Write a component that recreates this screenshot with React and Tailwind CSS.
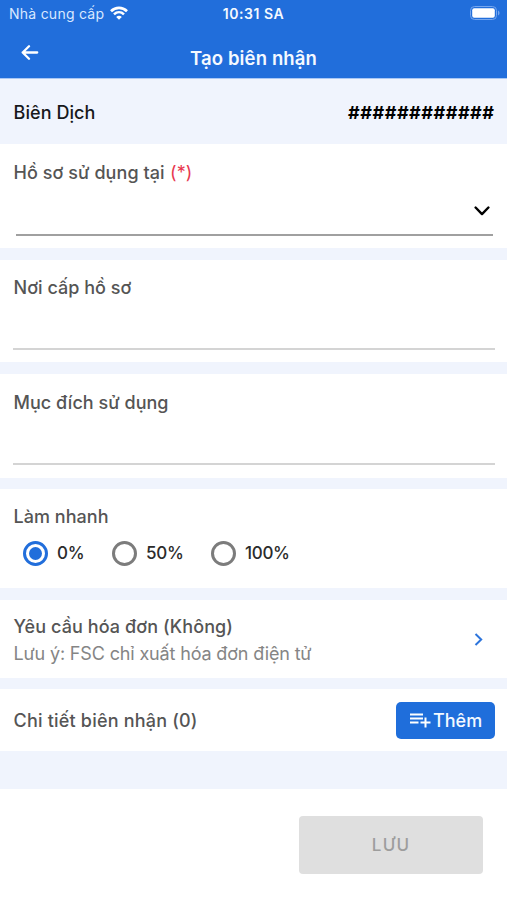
import React from "react";

const speeds = [
  { label: "0%", checked: true, box: "w-[89px]" },
  { label: "50%", checked: false, box: "w-[99px]" },
  { label: "100%", checked: false, box: "w-[90px]" },
];

function StatusBar() {
  return (
    <div className="grid h-7 grid-cols-3 items-center pr-[7px] pl-[9px] text-[14px] leading-7 text-white">
      <div className="flex items-center gap-[6px] text-[#d9e8ff]">
        <span className="tracking-[0.25px] whitespace-nowrap">Nhà cung cấp</span>
        <svg className="-mt-[2px] h-[14px] w-[18px]" viewBox="0 0 18 14" fill="none" stroke="#fff">
          <path d="M1 5.2C5.6.7 12.4.7 17 5.2" strokeWidth="2.7" />
          <path d="M4 8.4c2.9-2.8 7.1-2.8 10 0" strokeWidth="2.5" />
          <path d="M9 13.7 6.2 10.9c1.6-1.5 4-1.5 5.6 0Z" fill="#fff" stroke="none" />
        </svg>
      </div>
      <div className="-ml-[2px] text-center font-semibold tracking-[0.55px] text-[#f4f9ff]">10:31 SA</div>
      <svg className="-mt-[2px] h-[14px] w-[30px] justify-self-end" viewBox="0 0 30 14">
        <rect x="0.5" y="0.5" width="26" height="13" rx="4" fill="none" stroke="#75a6ee" />
        <rect x="2.2" y="2.2" width="22.6" height="9.6" rx="2" fill="#fff" />
        <path d="M28 4.5c2 .8 2 4.2 0 5Z" fill="#75a6ee" />
      </svg>
    </div>
  );
}

function TitleBar() {
  return (
    <div className="grid h-[50px] grid-cols-[60px_1fr_60px]">
      <svg className="mt-[17px] ml-[21px] h-[15px] w-[18px]" viewBox="0 0 18 15" fill="none" stroke="#fff" strokeWidth="2.3" strokeLinecap="round" strokeLinejoin="round">
        <path d="M16.2 7.5H1.7M8 1.3 1.7 7.5 8 13.7" />
      </svg>
      <h1 className="mt-[18px] text-center text-[18.5px] leading-6 font-semibold tracking-[0.13px] text-[#f4f9ff]">Tạo biên nhận</h1>
    </div>
  );
}

function Label({ children, spacing = "tracking-[0.03px]" }) {
  return <div className={`pl-[0.5px] text-[18px] leading-6 font-medium text-[#555] ${spacing}`}>{children}</div>;
}

function Radio({ checked }) {
  return (
    <span
      className={
        checked
          ? "flex size-[25px] items-center justify-center rounded-full border-[3px] border-[#216edb]"
          : "flex size-[25px] items-center justify-center rounded-full border-[3px] border-[#7c7c7c]"
      }
    >
      {checked && <span className="size-[13px] rounded-full bg-[#216edb]" />}
    </span>
  );
}

export default function App() {
  return (
    <div className="flex h-[900px] w-[507px] flex-col overflow-hidden bg-[#f0f4fd] font-['Inter','Liberation_Sans',sans-serif]">
      <header className="h-[79px] shrink-0 border-b border-[#a9c8f5] bg-[#216edb]">
        <StatusBar />
        <TitleBar />
      </header>

      <div className="flex h-[65px] shrink-0 items-center justify-between pt-[2px] pr-[12.5px] pl-[13.5px] text-[18px] leading-6">
        <span className="font-medium tracking-[0.07px] text-[#17181b]">Biên Dịch</span>
        <span className="font-bold tracking-[0.52px] text-black">############</span>
      </div>

      <section className="h-[104px] shrink-0 bg-white px-[13px] pt-[17px]">
        <Label spacing="tracking-[0.07px]">
          Hồ sơ sử dụng tại <span className="ml-[0.5px] font-normal text-[#e8384f]">(*)</span>
        </Label>
        <div className="mr-[1px] ml-[3px] flex h-[51px] items-center justify-end border-b-2 border-[#a0a0a0] pr-[3px]">
          <svg className="mt-[2px] h-[10px] w-4" viewBox="0 0 16 10" fill="none" stroke="#000" strokeWidth="2.4" strokeLinecap="round" strokeLinejoin="round">
            <path d="m1.6 1.5 6.4 6.6 6.4-6.6" />
          </svg>
        </div>
      </section>

      <section className="mt-3 h-[102px] shrink-0 bg-white px-[13px] pt-4">
        <Label>Nơi cấp hồ sơ</Label>
        <div className="-mr-px h-[50px] border-b-2 border-[#d4d4d4]" />
      </section>

      <section className="mt-3 h-[104px] shrink-0 bg-white px-[13px] pt-[17px]">
        <Label>Mục đích sử dụng</Label>
        <div className="-mr-px h-[50px] border-b-2 border-[#d4d4d4]" />
      </section>

      <section className="mt-[11px] h-[99px] shrink-0 bg-white px-[13px] pt-4">
        <Label>Làm nhanh</Label>
        <div className="mt-[12px] ml-[9.5px] flex h-[25px]">
          {speeds.map((s) => (
            <div key={s.label} className={`flex items-center gap-[9.5px] ${s.box}`}>
              <Radio checked={s.checked} />
              <span className="-mt-[2px] text-[17px] leading-6 font-[450] tracking-[-0.3px] text-[#2b2b2b]">{s.label}</span>
            </div>
          ))}
        </div>
      </section>

      <section className="mt-3 flex h-[78px] shrink-0 items-center justify-between bg-white pr-[24.5px] pl-[13px]">
        <div className="pt-[2px]">
          <Label spacing="tracking-[0.09px]">Yêu cầu hóa đơn (Không)</Label>
          <div className="mt-[3px] pl-[0.5px] text-[18px] leading-6 tracking-[-0.15px] text-[#858585]">Lưu ý: FSC chỉ xuất hóa đơn điện tử</div>
        </div>
        <svg className="mt-[1px] h-[13px] w-[9px]" viewBox="0 0 9 13" fill="none" stroke="#2d75dc" strokeWidth="2">
          <path d="m1.5 1 5.7 5.5-5.7 5.5" />
        </svg>
      </section>

      <section className="mt-[11px] flex h-[62px] shrink-0 items-center justify-between bg-white pr-[12px] pl-[13px]">
        <div className="pt-[2px]">
          <Label spacing="tracking-[0.2px]">Chi tiết biên nhận (0)</Label>
        </div>
        <button className="flex h-[37px] w-[99px] items-center gap-[2px] rounded-[5px] bg-[#1f6edb] pl-[14px] text-[18px] leading-6 font-medium text-[#f4f9ff]">
          <svg className="mt-px h-[15px] w-[21px] shrink-0" viewBox="0 0 21 15" fill="none" stroke="#fff" strokeWidth="2">
            <path d="M0 1.5h13M0 5.5h13M0 9.5h8.5M15.5 4.5v10M10.5 9.5h10" />
          </svg>
          <span className="pt-[2px]">Thêm</span>
        </button>
      </section>

      <footer className="mt-[38px] flex flex-1 items-start justify-end bg-white pt-[27px] pr-[24px]">
        <button className="h-[58px] w-[184px] rounded-[4px] bg-[#dfdfdf] pt-[2px] text-[17px] font-medium tracking-[1.2px] text-[#9d9d9d]">LƯU</button>
      </footer>
    </div>
  );
}
